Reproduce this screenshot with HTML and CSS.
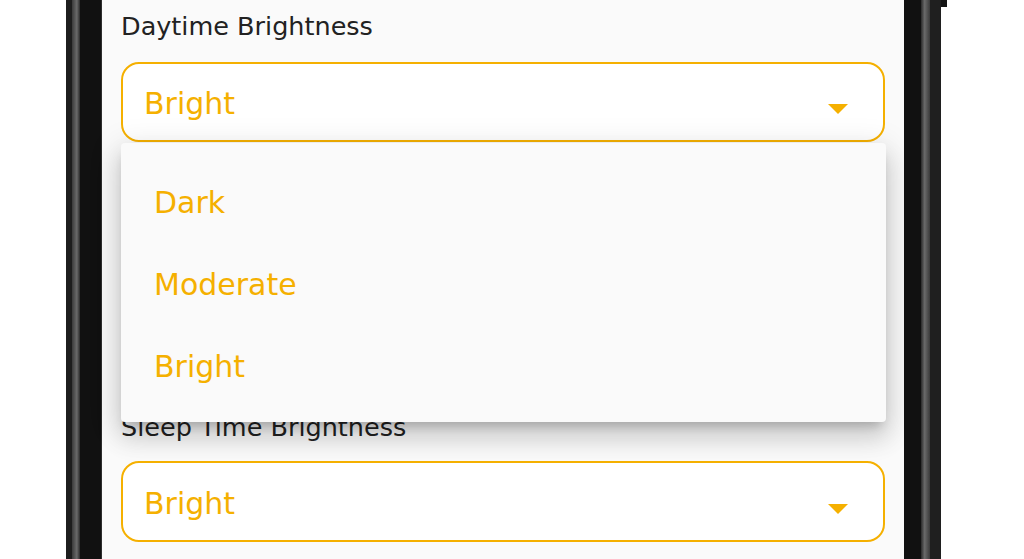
FILE: index.html
```html
<!DOCTYPE html>
<html lang="en">
<head>
<meta charset="utf-8">
<title>Brightness Settings</title>
<link rel="stylesheet" href="styles.css">
</head>
<body>
<div class="stage">
  <div class="frame frame-left"><span class="edge"></span><span class="shine"></span><span class="inner"></span></div>
  <div class="screen">
    <div class="label label-first">Daytime Brightness</div>
    <div class="dropdown dd-first">
      <span class="value">Bright</span>
      <span class="arrow"></span>
    </div>
    <div class="dropdown dd-second">
      <span class="value"></span>
      <span class="arrow"></span>
    </div>
    <div class="label label-third">Sleep Time Brightness</div>
    <div class="dropdown dd-third">
      <span class="value">Bright</span>
      <span class="arrow"></span>
    </div>

    <ul class="menu">
      <li class="menu-item">Dark</li>
      <li class="menu-item">Moderate</li>
      <li class="menu-item">Bright</li>
    </ul>
  </div>
  <div class="frame frame-right"><span class="inner"></span><span class="shine"></span><span class="edge"></span><span class="button"></span></div>
</div>
</body>
</html>
```

FILE: styles.css
```css
* { box-sizing: border-box; }

html, body {
  margin: 0;
  padding: 0;
  background: #ffffff;
  overflow: hidden;
}

body {
  font-family: "DejaVu Sans", "Open Sans", sans-serif;
}

.stage {
  display: flex;
  height: 559px;
  padding-left: 66px;
}

.frame {
  display: flex;
  height: 100%;
  position: relative;
}

.frame-left { width: 36px; }
.frame-left .edge { width: 6px; background: #1d1d1d; }
.frame-left .shine { width: 8px; background: linear-gradient(90deg, #3a3a3a, #6a6a6a 60%, #2a2a2a); }
.frame-left .inner { flex: 1; background: #111111; border-right: 1px solid #2e2e2e; }

.frame-right { width: 37px; }
.frame-right .inner { width: 17px; background: #111111; }
.frame-right .shine { width: 9px; background: linear-gradient(90deg, #2a2a2a, #6a6a6a 40%, #3a3a3a); }
.frame-right .edge { width: 11px; background: #1f1f1f; }
.frame-right .button {
  position: absolute;
  left: 37px;
  top: 0;
  width: 6px;
  height: 7px;
  background: #151515;
}

.screen {
  position: relative;
  width: 802px;
  height: 100%;
  background: #fafafa;
  padding: 0 19px;
  display: flex;
  flex-direction: column;
}

.label {
  font-size: 25.5px;
  line-height: 30px;
  color: #222222;
  white-space: nowrap;
}

.label-first { margin-top: 11px; }
.label-third { margin-top: 94px; }

.dropdown {
  height: 80px;
  border: 2px solid #f5b000;
  border-radius: 18px;
  background: #ffffff;
  display: flex;
  align-items: center;
  justify-content: space-between;
  padding: 4px 35px 0 21px;
  color: #f5b000;
  font-size: 30px;
  flex-shrink: 0;
}

.dd-first { margin-top: 21px; }
.dd-second { margin-top: 96px; }
.dd-third { margin-top: 19px; height: 81px; }

.value { line-height: 36px; }

.arrow {
  width: 0;
  height: 0;
  border-left: 10px solid transparent;
  border-right: 10px solid transparent;
  border-top: 10px solid #f5b000;
  margin-top: 10px;
}

.menu {
  position: absolute;
  left: 19px;
  top: 143px;
  width: 765px;
  height: 279px;
  margin: 0;
  padding: 18px 0 15px;
  list-style: none;
  background: #fafafa;
  border-radius: 4px;
  box-shadow: 0 8px 10px -5px rgba(0,0,0,0.2), 0 16px 24px 2px rgba(0,0,0,0.12), 0 6px 30px 5px rgba(0,0,0,0.1);
}

.menu-item {
  height: 82px;
  display: flex;
  align-items: center;
  padding-left: 33px;
  font-size: 30px;
  color: #f5b000;
}
```
